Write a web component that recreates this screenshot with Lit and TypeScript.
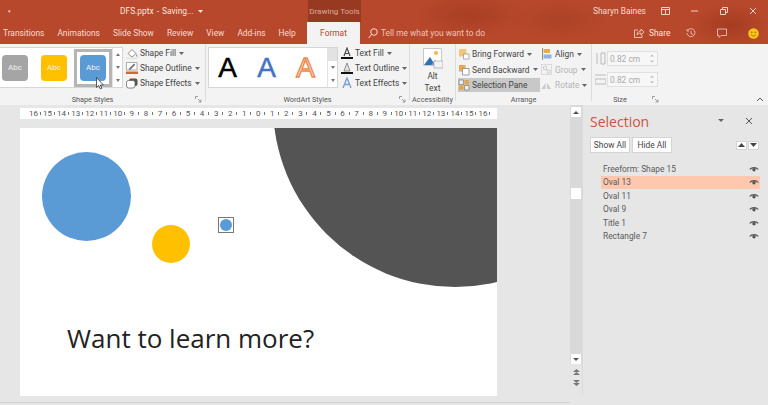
import { LitElement, html, css, svg } from 'lit';
import { customElement } from 'lit/decorators.js';

const caret = html`<svg class="caret" width="5" height="3" viewBox="0 0 5 3"><path d="M0 0h5L2.5 3z" fill="#666"/></svg>`;
const launcher = html`<svg class="launcher" width="7" height="7" viewBox="0 0 7 7"><path d="M.5 3V.5H3M3 3l3 3M6 3.500V6H3.500" fill="none" stroke="#888" stroke-width=".8"/></svg>`;
const eye = html`<svg width="10" height="6" viewBox="0 0 10 6"><path d="M.3 3.2C2.500.3 7.500.3 9.700 3.200L8.800 3.800C7 2 3 2 1.200 3.800z" fill="#555"/><circle cx="5" cy="3.800" r="1.700" fill="#555"/></svg>`;
const spinArrows = html`<svg class="spinarrows" width="4" height="9" viewBox="0 0 4 9"><path d="M0 2.500L2 .5l2 2zM0 6.500l2 2 2-2z" fill="#bbb"/></svg>`;

const icons: Record<string, unknown> = {
	fill: svg`<path d="M2 6.500L6 2.500l4 4-4 3.500z" fill="#fff" stroke="#777" stroke-width=".8"/><path d="M10.500 7c.8 1.300 1.200 1.800.8 2.500s-1.700 0-.8-2.500z" fill="#888"/><path d="M0 10.500h12V12H0z" fill="#e4e4e4"/>`,
	outline: svg`<path d="M.5 .5h10.500v7.500H.5z" fill="#fff" stroke="#999" stroke-width=".8"/><path d="M2.500 7l5.500-5.500 1.300 1.300-5.500 5.500z" fill="#777"/><path d="M0 9.500h12V12H0z" fill="#d9662c"/>`,
	effects: svg`<rect x="3" y="1.500" width="8.500" height="7.500" rx="2" fill="#555"/><rect x=".5" y="3.500" width="8.500" height="7.500" rx="2" fill="#fff" stroke="#666" stroke-width=".8"/>`,
	tfill: svg`<path d="M3 9L6 1l3 8M4.200 6.500h3.600" fill="none" stroke="#444" stroke-width="1.100"/><path d="M0 10h12v2H0z" fill="#111"/>`,
	toutline: svg`<path d="M3 9L6 1l3 8z" fill="#e6e6e6" stroke="#777" stroke-width=".8"/><path d="M0 10h12v2H0z" fill="#111"/>`,
	teffects: svg`<path d="M2 11L6 1l4 10M3.800 7.500h4.400" fill="none" stroke="#7d9fd8" stroke-width="1.400"/>`,
	forward: svg`<path d="M1 1h7.500v7.500H1z" fill="#f2c877"/><path d="M5.500 6h5.500v5H5.500z" fill="#fff" stroke="#999" stroke-width=".8"/>`,
	backward: svg`<path d="M1 1h6.500v6.500H1z" fill="#eaa655"/><path d="M4.500 4.500h6.500v6.500H4.500z" fill="#fff" stroke="#888" stroke-width=".8"/>`,
	selpane: svg`<path d="M1 1h4.500v4.500H1zM6.500 6.500H11V11H6.500z" fill="#eee" stroke="#888" stroke-width=".8"/><path d="M6.500 1H11v4.500H6.500z" fill="#e2a64f"/><path d="M1 6.500h4.500V11H1z" fill="#e2a64f"/>`,
	align: svg`<path d="M1.500 0v12" stroke="#777" stroke-width=".8"/><path d="M2.500 1H9v4H2.500z" fill="#e4ab50"/><path d="M2.500 6.500h8v4h-8z" fill="#8fb4dd"/>`,
	group: svg`<path d="M.5 .5h10v10H.5z" fill="none" stroke="#c4c4c4" stroke-dasharray="2 1" stroke-width=".8"/><path d="M2.500 2.500h3v3h-3zM6 6h3v3H6z" fill="none" stroke="#c4c4c4" stroke-width=".8"/>`,
	rotate: svg`<path d="M.5 10l4-6v6zM6 10V4l4 6z" fill="#cacaca"/>`,
};
const icon = (n: string) => html`<svg class="ico" width="12" height="12" viewBox="0 0 12 12">${icons[n]}</svg>`;

const tabs = ['Transitions', 'Animations', 'Slide Show', 'Review', 'View', 'Add-ins', 'Help'];
const swatches = [['#a5a5a5', 0], ['#ffc000', 0], ['#5b9bd5', 1]] as const;
const rulerNums = [...Array(33).keys()].map((i) => Math.abs(i - 16));
const layers = ['Freeform: Shape 15', 'Oval 13', 'Oval 11', 'Oval 9', 'Title 1', 'Rectangle 7'];

@customElement('app-root')
export class AppRoot extends LitElement {
	static styles = css`
		:host {
			display: flex;
			flex-direction: column;
			width: 768px;
			height: 405px;
			overflow: hidden;
			position: relative;
			background: #e6e6e6;
			font-family: Roboto, 'Noto Sans', sans-serif;
			font-size: 8.4px;
			color: #444;
		}
		.head {
			height: 44px;
			flex: none;
			background:
				radial-gradient(ellipse 60px 24px at 470px 15px, #a93f24 0, transparent 100%),
				radial-gradient(ellipse 50px 22px at 560px 20px, #ad4226 0, transparent 100%),
				radial-gradient(ellipse 40px 22px at 730px 25px, #a53c22 0, transparent 100%),
				#b8482b;
			color: #f6dcd2;
		}
		.titlebar {
			height: 22px;
			display: flex;
			align-items: center;
			position: relative;
		}
		.qat { margin-left: 8px; width: 112px; font-size: 5px; flex: none; }
		.doc { width: 188px; flex: none; color: #f8e6df; display: flex; align-items: center; gap: 4px; white-space: nowrap; word-spacing: 1px; }
		.doc .caret path { fill: #f8e6df; }
		.tools {
			width: 53px;
			height: 22px;
			flex: none;
			background: #983a22;
			color: #dba99a;
			font-size: 8px;
			display: flex;
			align-items: center;
			justify-content: center;
			white-space: nowrap;
		}
		.user { margin-left: 232px; width: 55px; flex: none; white-space: nowrap; }
		.winbtns { display: flex; align-items: center; }
		.winbtns svg { display: block; }
		.winbtns svg:first-child { margin-left: 13px; }
		.winbtns svg + svg { margin-left: 21px; }
		.tabrow {
			height: 22px;
			display: flex;
			align-items: center;
		}
		.tabs { width: 307px; flex: none; display: flex; gap: 13px; padding-left: 3px; box-sizing: border-box; }
		.tab { white-space: nowrap; }
		.format {
			width: 53px;
			height: 22px;
			background: #f3f3f3;
			color: #b7472a;
			display: flex;
			align-items: center;
			justify-content: center;
			flex: none;
		}
		.tell { margin-left: 8px; width: 266px; flex: none; display: flex; align-items: center; gap: 3px; white-space: nowrap; color: #eec4b6; }
		.share { display: flex; align-items: center; gap: 5px; width: 52px; flex: none; color: #f8e6df; }
		.tabicons { display: flex; gap: 21px; align-items: center; }
		.ribbon {
			height: 61px;
			flex: none;
			display: flex;
			background: #f3f3f3;
			position: relative;
		}
		.group {
			position: relative;
			height: 57px;
			flex: none;
			border-right: 1px solid #dcdcdc;
			display: flex;
			padding-top: 3px;
			box-sizing: border-box;
		}
		.group-label {
			position: absolute;
			left: 0;
			right: 0;
			top: 50px;
			text-align: center;
			font-size: 7.3px;
			line-height: 11px;
			color: #555;
			white-space: nowrap;
		}
		.launcher { position: absolute; right: 3px; top: 52px; }
		.gallery {
			display: flex;
			height: 41px;
			box-sizing: border-box;
			background: #fff;
			border: 1px solid #d6d6d6;
			flex: none;
			position: relative;
		}
		.shape-gallery { width: 123px; border-left: 0; padding-left: 2px; gap: 13px; align-items: center; }
		.swatch {
			width: 26px;
			height: 26px;
			border-radius: 4px;
			color: #f2f2f2;
			font-size: 8px;
			display: flex;
			align-items: center;
			justify-content: center;
			flex: none;
			position: relative;
		}
		.swatch.on::after {
			content: '';
			position: absolute;
			inset: -6px;
			border: 3px solid #b5b5b5;
			border-radius: 0;
		}
		.scroll {
			position: absolute;
			right: 0;
			top: 0;
			bottom: 0;
			width: 9px;
			border-left: 1px solid #e2e2e2;
			display: flex;
			flex-direction: column;
			align-items: center;
			justify-content: space-around;
			background: #fff;
		}
		.scroll.first::before {
			content: '';
			position: absolute;
			left: 0;
			right: 0;
			top: 0;
			height: 13px;
			background: #e2e2e2;
		}
		.scroll i { display: block; width: 0; height: 0; border: 2px solid transparent; border-top: 3px solid #777; border-bottom: 0; }
		.scroll i.up { border-top: 0; border-bottom: 3px solid #777; }
		.cmds {
			display: flex;
			flex-direction: column;
			margin: -1px 0 0 3px;
			gap: 1px;
		}
		.cmds.wide { gap: 1.5px; margin-left: 1px; }
		.cmd {
			height: 14px;
			display: flex;
			align-items: center;
			gap: 2px;
			white-space: nowrap;
		}
		.cmd .caret { margin-left: 1px; }
		.cmd.dim { color: #b5b5b5; }
		.cmd.on { background: #c8c8c8; padding-right: 4px; }
		.ico { flex: none; display: block; }
		.word-gallery { width: 130px; }
		.letters {
			display: flex;
			align-items: center;
			margin-left: -1px;
			font-family: 'Liberation Sans', sans-serif;
			font-size: 28px;
		}
		.letters span { width: 39px; text-align: center; line-height: 38px; -webkit-text-stroke: .5px currentColor; }
		.a2 { color: #4472c4; }
		.letters .a3 { color: #fbe5d6; -webkit-text-stroke: 1.4px #ed8b4c; }
		.a1 { color: #000; }
		.alt { display: flex; flex-direction: column; align-items: center; width: 100%; text-align: center; line-height: 12px; }
		.alt svg { margin: 1px 0; flex: none; }
		.arrange { display: flex; padding-top: 1px; }
		.col-left { width: 82px; }
		.spins { display: flex; flex-direction: column; gap: 6px; padding: 4px 0 0 3px; }
		.spinrow { display: flex; align-items: center; gap: 1px; }
		.spin {
			width: 51px;
			height: 15px;
			box-sizing: border-box;
			background: #f7f7f7;
			border: 1px solid #e0e0e0;
			color: #aaa;
			padding: 0 3px 0 2px;
			display: flex;
			align-items: center;
			justify-content: space-between;
		}
		.offset-label .group-label { right: 20px; }
		.size .launcher { right: 9px; }
		.main { flex: 1; display: flex; min-height: 0; }
		.editor {
			width: 570px;
			flex: none;
			box-sizing: border-box;
			padding: 3px 0 0 20px;
			border-bottom: 1px solid #d2d2d2;
			height: 298px;
		}
		.ruler {
			width: 477px;
			height: 11px;
			background: #fff;
			box-sizing: border-box;
			padding-left: 6.5px;
			display: flex;
			font-size: 8px;
			line-height: 11px;
			color: #555;
		}
		.ruler span {
			width: 14.06px;
			flex: none;
			text-align: center;
			background: linear-gradient(#777, #777) right center / 1px 3px no-repeat;
		}
		.slide {
			width: 477px;
			height: 268px;
			margin-top: 9px;
			background: #fff;
			position: relative;
			overflow: hidden;
		}
		.shape { position: absolute; border-radius: 50%; }
		.big { left: 253px; top: -205px; width: 364px; height: 364px; background: #545454; }
		.blue { left: 22px; top: 24px; width: 89px; height: 89px; background: #5b9bd5; }
		.yellow { left: 132px; top: 97px; width: 38px; height: 38px; background: #ffc000; }
		.picked {
			position: absolute;
			left: 198px;
			top: 89px;
			width: 16px;
			height: 16px;
			box-sizing: border-box;
			border: 1px solid #777;
			display: flex;
			align-items: center;
			justify-content: center;
		}
		.picked i { width: 12px; height: 12px; border-radius: 50%; background: #5b9bd5; }
		.headline {
			position: absolute;
			left: 47px;
			top: 190px;
			font-family: 'Open Sans', sans-serif;
			font-size: 26px;
			line-height: 40px;
			color: #222;
			white-space: nowrap;
		}
		.vscroll {
			width: 13px;
			flex: none;
			display: flex;
			flex-direction: column;
			align-items: center;
			height: 290px;
			box-sizing: border-box;
			border-right: 1px solid #dadada;
		}
		.track {
			width: 100%;
			background: #d9d9d9;
			display: flex;
			flex-direction: column;
			align-items: center;
			padding-top: 2px;
			flex: none;
		}
		.vbtn { width: 10px; height: 10px; background: #fff; display: flex; align-items: center; justify-content: center; flex: none; }
		.thumb { width: 10px; height: 11px; background: #fff; margin-top: 71px; flex: none; }
		.vbtn.down { margin-top: 155px; }
		.dbl { margin-top: 5px; flex: none; display: block; }
		.pane { flex: 1; padding: 0 8px 0 7px; position: relative; }
		.pane-head { display: flex; align-items: center; height: 32px; }
		.pane-title { font-family: 'Open Sans', sans-serif; font-size: 14px; color: #c8553f; width: 126px; }
		.pane-caret { margin-left: 2px; }
		.pane-close { margin-left: 21px; }
		.btnrow { display: flex; gap: 2px; align-items: center; }
		.pbtn {
			height: 16px;
			width: 40px;
			background: #fff;
			border: 1px solid #d4d4d4;
			box-sizing: border-box;
			line-height: 14px;
			text-align: center;
			white-space: nowrap;
		}
		.order { margin-left: auto; display: flex; gap: 1px; margin-right: 1px; }
		.order b { width: 11px; height: 9px; background: #fff; border: 1px solid #d4d4d4; box-sizing: border-box; display: flex; align-items: center; justify-content: center; }
		.list { margin: 9px 0 0 11px; width: 159px; }
		.row {
			height: 13.5px;
			display: flex;
			align-items: center;
			justify-content: space-between;
			padding: 0 1px 0 2px;
			white-space: nowrap;
			color: #5a5a5a;
		}
		.row.on { background: #fdc8ae; }
		.chev { position: absolute; left: 756px; top: 53px; }
		.cursor { position: absolute; left: 96px; top: 33px; }
	`;

	render() {
		return html`
			<div class="head">
				<div class="titlebar">
					<div class="qat">▾</div>
					<div class="doc">DFS.pptx - Saving... ${caret}</div>
					<div class="tools">Drawing Tools</div>
					<div class="user">Sharyn Baines</div>
					<div class="winbtns">
						<svg width="9" height="8" viewBox="0 0 9 8"><path d="M.5.5h8v7h-8zM.5 2.500h8M4.500 3v4" fill="none" stroke="#f0cfc4"/></svg>
						<svg width="8" height="8" viewBox="0 0 8 8"><path d="M0 4h7" stroke="#f0cfc4"/></svg>
						<svg width="8" height="8" viewBox="0 0 8 8"><path d="M.5 2.500h5v5h-5zM2.500 2V.5h5v5H6" fill="none" stroke="#f0cfc4"/></svg>
						<svg width="8" height="8" viewBox="0 0 8 8"><path d="M1 1l6 6M7 1L1 7" stroke="#f0cfc4"/></svg>
					</div>
				</div>
				<div class="tabrow">
					<div class="tabs">${tabs.map((t) => html`<div class="tab">${t}</div>`)}</div>
					<div class="format">Format</div>
					<div class="tell">
						<svg width="10" height="11" viewBox="0 0 10 11"><circle cx="6" cy="4" r="3.300" fill="none" stroke="#f6dcd2"/><path d="M3.500 6.500L.7 10" stroke="#f6dcd2"/></svg>
						Tell me what you want to do
					</div>
					<div class="share">
						<svg width="10" height="10" viewBox="0 0 10 10"><path d="M4 2H.5v7.500h7.500V7M3 7c0-3 2-4 4-4V1l3 3-3 3V5C5 5 4 6 3 7z" fill="none" stroke="#f6dcd2" stroke-width=".8"/></svg>
						Share
					</div>
					<div class="tabicons">
						<svg width="10" height="10" viewBox="0 0 10 10"><path d="M2 2a4 4 0 1 1-1 3M1 1v2h2M5 3v2.500l2 1" fill="none" stroke="#f0cfc4" stroke-width=".8"/></svg>
						<svg width="10" height="10" viewBox="0 0 10 10"><path d="M.5 1h9v6.500H4L2 9.500v-2H.5z" fill="none" stroke="#f0cfc4" stroke-width=".8"/></svg>
						<svg width="11" height="11" viewBox="0 0 11 11"><circle cx="5.500" cy="5.500" r="5.300" fill="#fcc419"/><circle cx="3.800" cy="4.300" r=".7" fill="#7a5a00"/><circle cx="7.200" cy="4.300" r=".7" fill="#7a5a00"/><path d="M3 6.500c1 2 4 2 5 0" fill="none" stroke="#7a5a00" stroke-width=".7"/></svg>
					</div>
				</div>
			</div>

			<div class="ribbon">
				<div class="group offset-label" style="width:206px">
					<div class="gallery shape-gallery">
						${swatches.map(([c, on]) => html`<div class="swatch ${on ? 'on' : ''}" style="background:${c}">Abc</div>`)}
						<div class="scroll"><i class="up"></i><i></i><i></i></div>
					</div>
					<div class="cmds">
						<div class="cmd">${icon('fill')}Shape Fill ${caret}</div>
						<div class="cmd">${icon('outline')}Shape Outline ${caret}</div>
						<div class="cmd">${icon('effects')}Shape Effects ${caret}</div>
					</div>
					<div class="group-label">Shape Styles</div>
					${launcher}
				</div>
				<div class="group" style="width:204px;padding-left:2px">
					<div class="gallery word-gallery">
						<div class="letters"><span class="a1">A</span><span class="a2">A</span><span class="a3">A</span></div>
						<div class="scroll first"><i class="up"></i><i></i><i></i></div>
					</div>
					<div class="cmds">
						<div class="cmd">${icon('tfill')}Text Fill ${caret}</div>
						<div class="cmd">${icon('toutline')}Text Outline ${caret}</div>
						<div class="cmd">${icon('teffects')}Text Effects ${caret}</div>
					</div>
					<div class="group-label">WordArt Styles</div>
					${launcher}
				</div>
				<div class="group" style="width:46px">
					<div class="alt">
						<svg width="20" height="21" viewBox="0 0 20 21"><path d="M.5.5h18v17H.5z" fill="#fff" stroke="#c8c8c8"/><circle cx="13" cy="5" r="2" fill="#f2b84b"/><path d="M1 17l6-8 5 8z" fill="#2f6fb3"/><path d="M8 17l4-5 4 5z" fill="#6fa3d6"/><path d="M11 13h9v7h-9z" fill="#f3f3f3" stroke="#999" stroke-width=".6"/></svg>
						<span>Alt</span>
						<span>Text</span>
					</div>
					<div class="group-label">Accessibility</div>
				</div>
				<div class="group" style="width:136px;padding-left:1px">
					<div class="arrange">
						<div class="cmds wide col-left">
							<div class="cmd">${icon('forward')}Bring Forward ${caret}</div>
							<div class="cmd">${icon('backward')}Send Backward ${caret}</div>
							<div class="cmd on">${icon('selpane')}Selection Pane</div>
						</div>
						<div class="cmds wide">
							<div class="cmd">${icon('align')}Align ${caret}</div>
							<div class="cmd dim">${icon('group')}Group ${caret}</div>
							<div class="cmd dim">${icon('rotate')}Rotate ${caret}</div>
						</div>
					</div>
					<div class="group-label">Arrange</div>
				</div>
				<div class="group offset-label size" style="width:76px;border-right:0">
					<div class="spins">
						<div class="spinrow">
							<svg width="11" height="13" viewBox="0 0 11 13"><path d="M2 1v11M6 1h4v11H6z" fill="none" stroke="#bbb"/></svg>
							<div class="spin">0.82 cm ${spinArrows}</div>
						</div>
						<div class="spinrow">
							<svg width="11" height="13" viewBox="0 0 11 13"><path d="M0 2h11M0 6h11v5H0z" fill="none" stroke="#bbb"/></svg>
							<div class="spin">0.82 cm ${spinArrows}</div>
						</div>
					</div>
					<div class="group-label">Size</div>
					${launcher}
				</div>
				<svg class="chev" width="8" height="5" viewBox="0 0 8 5"><path d="M1 4l3-3 3 3" fill="none" stroke="#555"/></svg>
				<svg class="cursor" width="8" height="13" viewBox="0 0 8 13"><path d="M.5.5v10l2.300-2 1.500 3.500 1.500-.7-1.500-3.300h3z" fill="#fff" stroke="#333" stroke-width=".8"/></svg>
			</div>

			<div class="main">
				<div class="editor">
					<div class="ruler">${rulerNums.map((n) => html`<span>${n}</span>`)}</div>
					<div class="slide">
						<div class="shape big"></div>
						<div class="shape blue"></div>
						<div class="shape yellow"></div>
						<div class="picked"><i></i></div>
						<div class="headline">Want to learn more?</div>
					</div>
				</div>
				<div class="vscroll">
					<div class="track">
						<div class="vbtn"><svg width="6" height="3" viewBox="0 0 6 3"><path d="M0 3h6L3 0z" fill="#555"/></svg></div>
						<div class="thumb"></div>
						<div class="vbtn down"><svg width="6" height="3" viewBox="0 0 6 3"><path d="M0 0h6L3 3z" fill="#555"/></svg></div>
					</div>
					<svg class="dbl" width="7" height="6" viewBox="0 0 7 6"><path d="M0 3L3.500 0 7 3zM0 6l3.500-3L7 6z" fill="#777"/></svg>
					<svg class="dbl" width="7" height="6" viewBox="0 0 7 6"><path d="M0 0l3.500 3L7 0zM0 3l3.500 3L7 3z" fill="#777"/></svg>
				</div>
				<div class="pane">
					<div class="pane-head">
						<div class="pane-title">Selection</div>
						<svg class="pane-caret" width="6" height="4" viewBox="0 0 6 4"><path d="M0 0h6L3 3z" fill="#666"/></svg>
						<svg class="pane-close" width="8" height="8" viewBox="0 0 8 8"><path d="M1 1l6 6M7 1L1 7" stroke="#555"/></svg>
					</div>
					<div class="btnrow">
						<div class="pbtn">Show All</div>
						<div class="pbtn">Hide All</div>
						<div class="order">
							<b><svg width="7" height="4" viewBox="0 0 7 4"><path d="M0 4h7L3.500 0z" fill="#444"/></svg></b>
							<b><svg width="7" height="4" viewBox="0 0 7 4"><path d="M0 0h7L3.500 4z" fill="#444"/></svg></b>
						</div>
					</div>
					<div class="list">
						${layers.map((l, i) => html`<div class="row ${i === 1 ? 'on' : ''}">${l}${eye}</div>`)}
					</div>
				</div>
			</div>
		`;
	}
}
